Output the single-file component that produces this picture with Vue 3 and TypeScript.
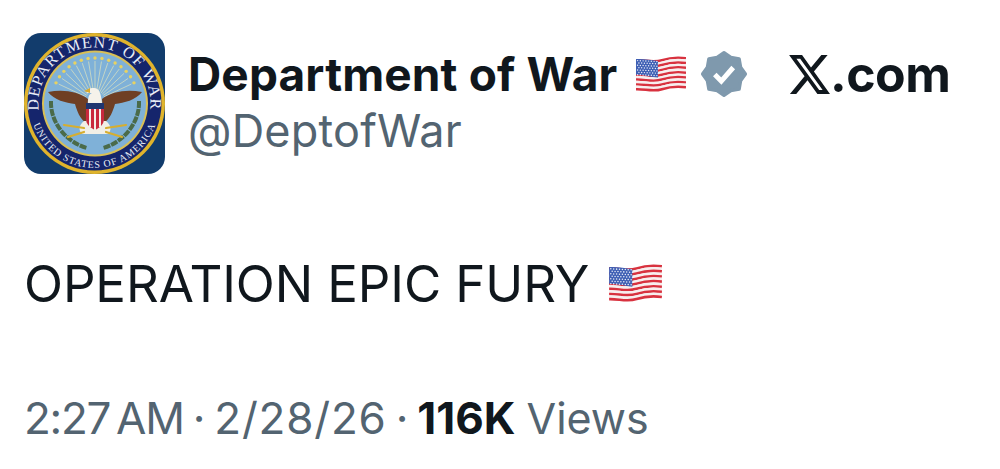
<script setup lang="ts">
const stripeColors = ['#d8323f', '#f7eeee', '#d8323f', '#f7eeee', '#d8323f', '#f7eeee', '#d8323f', '#f7eeee', '#d8323f', '#f7eeee', '#d8323f', '#f7eeee', '#d8323f']
const stripes = stripeColors.map((color, i) => {
  const y = 4.2 + i * 2.42
  return { color, d: `M0 ${y} C 9 ${y - 0.4} 17 ${y + 3} 26 ${y} S 42 ${y - 3} 50 ${y - 2}` }
})
const stars: { x: number; y: number }[] = []
for (let r = 0; r < 7; r++) {
  for (let c = 0; c < 8; c++) {
    stars.push({ x: 1.6 + c * 2.75 + (r % 2 ? 1.3 : 0), y: 4.6 + r * 2.35 + (c / 7) * 0.9 })
  }
}
const rays: { x1: number; y1: number; x2: number; y2: number; dx: number; dy: number }[] = []
for (let i = 0; i <= 14; i++) {
  const a = ((-155 + (i * 130) / 14) * Math.PI) / 180
  rays.push({
    x1: 71 + 10 * Math.cos(a),
    y1: 68 + 10 * Math.sin(a),
    x2: 71 + 40 * Math.cos(a),
    y2: 68 + 40 * Math.sin(a),
    dx: 71 + 43 * Math.cos(a),
    dy: 68 + 43 * Math.sin(a),
  })
}
const badgePoints = Array.from({ length: 16 }, (_, i) => {
  const a = ((i * 22.5 - 90) * Math.PI) / 180
  const r = i % 2 === 0 ? 19.8 : 16.6
  return `${(24 + r * Math.cos(a)).toFixed(2)},${(24 + r * Math.sin(a)).toFixed(2)}`
}).join(' ')
</script>

<template>
  <main class="tweet">
    <svg class="defs" width="0" height="0" aria-hidden="true">
      <symbol id="us-flag" viewBox="0 0 50 36">
        <g fill="none" stroke-width="2.5">
          <path v-for="(s, i) in stripes" :key="i" :d="s.d" :stroke="s.color" />
        </g>
        <path d="M0 3 C 8 2.6 15 4 22 5 V 21.6 C 15 21 8 18.6 0 18.8 Z" fill="#3e5fb4" />
        <g fill="#e9edf8">
          <circle v-for="(s, i) in stars" :key="i" :cx="s.x" :cy="s.y" r="0.72" />
        </g>
      </symbol>
    </svg>

    <header class="head">
      <svg class="avatar" viewBox="0 0 141 141" role="img" aria-label="Department of War seal">
        <rect width="141" height="141" rx="17" fill="#123c6c" />
        <circle cx="70.5" cy="70.5" r="70.5" fill="#e0b42c" />
        <circle cx="70.5" cy="70.5" r="67" fill="#15256c" />
        <circle cx="71" cy="70.5" r="53" fill="#d9bf55" />
        <circle cx="71" cy="70.5" r="51" fill="#7fb1d8" />
        <defs>
          <path id="seal-top" d="M 17.9 89.7 A 56 56 0 1 1 123.1 89.7" />
          <path id="seal-bottom" d="M 9.9 48.4 A 64.5 64.5 0 1 0 131.1 48.4" />
        </defs>
        <text class="seal top"><textPath href="#seal-top" startOffset="50%" text-anchor="middle">DEPARTMENT OF WAR</textPath></text>
        <text class="seal bottom"><textPath href="#seal-bottom" startOffset="50%" text-anchor="middle">UNITED STATES OF AMERICA</textPath></text>
        <circle cx="11" cy="68" r="1.2" fill="#dfe6f2" />
        <circle cx="130" cy="68" r="1.2" fill="#dfe6f2" />
        <g stroke="#c9d8c4" stroke-width="0.9">
          <line v-for="(r, i) in rays" :key="i" :x1="r.x1" :y1="r.y1" :x2="r.x2" :y2="r.y2" />
        </g>
        <g fill="#e8d261">
          <circle v-for="(r, i) in rays" :key="'d' + i" :cx="r.dx" :cy="r.dy" r="1.7" />
        </g>
        <g fill="none" stroke="#4a6b4a" stroke-width="4">
          <path d="M27 68 C 26 88 41 109 63 115" stroke-dasharray="7 1" />
          <path d="M115 68 C 116 88 101 109 79 115" stroke-dasharray="7 1" />
        </g>
        <path d="M24 59 C 38 56 54 58 64 66 L 62 90 C 56 86 53 78 51 71 C 42 70 30 67 24 59 Z" fill="#6f3f24" />
        <path d="M118 59 C 104 56 88 58 78 66 L 80 90 C 86 86 89 78 91 71 C 100 70 112 67 118 59 Z" fill="#6f3f24" />
        <path d="M60 88 C 55 92 54 97 58 101 L 84 101 C 88 97 87 92 82 88 Z" fill="#f1efe6" />
        <path d="M62 70 H 80 V 86 C 80 92 75 95 71 97 C 67 95 62 92 62 86 Z" fill="#c9293d" />
        <path d="M62 70 H 80 V 76 H 62 Z" fill="#20366f" />
        <g fill="#f4f1ea">
          <rect x="65" y="76" width="2" height="18" />
          <rect x="70" y="76" width="2" height="21" />
          <rect x="75" y="76" width="2" height="18" />
        </g>
        <path d="M64 70 C 64 64 65 61 68 60 L 63 60 C 62 57 65 55 70 55 C 75 55 77 60 78 70 Z" fill="#f5f2ea" />
        <path d="M66 55 L 60 58 L 66 60 Z" fill="#d8a92c" />
        <g stroke="#d6ae30" stroke-width="2.2" stroke-linecap="round" fill="none">
          <path d="M60 95 L 40 92" />
          <path d="M60 99 L 44 104" />
          <path d="M82 95 L 102 92" />
          <path d="M82 99 L 98 104" />
        </g>
      </svg>

      <div class="identity">
        <div class="name-row">
          <span class="name">Department of War</span>
          <svg class="flag flag-name" viewBox="0 0 50 36" aria-hidden="true"><use href="#us-flag" /></svg>
          <svg class="badge" viewBox="0 0 48 48" aria-label="Verified">
            <polygon :points="badgePoints" fill="#7f99ad" stroke="#7f99ad" stroke-width="3" stroke-linejoin="round" />
            <path d="M15.5 24.5 L 21.5 30.5 L 32.5 18" fill="none" stroke="#fff" stroke-width="4.6" />
          </svg>
        </div>
        <div class="handle">@DeptofWar</div>
      </div>

      <div class="site">
        <svg class="x" viewBox="1.2 2.25 21.6 19.5" preserveAspectRatio="none" aria-label="X">
          <path d="M18.244 2.25h3.308l-7.227 8.26 8.502 11.24H16.17l-5.214-6.817L4.99 21.75H1.68l7.73-8.835L1.254 2.25H8.08l4.713 6.231zm-1.161 17.52h1.833L7.084 4.126H5.117z" fill="#10171d" />
        </svg>
        <span>.com</span>
      </div>
    </header>

    <p class="body">
      <span>OPERATION EPIC FURY</span>
      <svg class="flag flag-body" viewBox="0 0 50 36" aria-hidden="true"><use href="#us-flag" /></svg>
    </p>

    <footer class="meta">
      <span class="time">2:27 AM</span>
      <span>·</span>
      <span class="date">2/28/26</span>
      <span>·</span>
      <strong>116K</strong>
      <span class="views">Views</span>
    </footer>
  </main>
</template>

<style>
html, body { background: #fff; }
</style>

<style scoped>
.tweet {
  width: 1000px;
  height: 469px;
  box-sizing: border-box;
  padding: 33px 24px 0;
  background: #fff;
  color: #10171d;
  font-family: Inter, "Liberation Sans", sans-serif;
  overflow: hidden;
}
.defs { display: block; height: 0; }
.head { display: flex; align-items: flex-start; }
.avatar { width: 141px; height: 141px; flex: none; }
.seal { font-family: "Liberation Serif", serif; fill: #e8edf6; }
.seal.top { font-size: 16px; letter-spacing: 1.2px; }
.seal.bottom { font-size: 10px; letter-spacing: 0.9px; }
.identity { margin-left: 23px; width: 601px; padding-top: 12px; flex: none; }
.name-row { display: flex; align-items: center; height: 58px; }
.name { font-size: 46px; font-weight: 700; letter-spacing: 0.15px; white-space: nowrap; }
.flag { flex: none; display: block; }
.flag-name { width: 50px; height: 36px; margin-left: 18px; }
.badge { width: 52px; height: 52px; margin-left: 12px; flex: none; }
.handle { font-size: 45px; color: #536471; line-height: 54px; letter-spacing: 0.2px; margin-top: 1px; white-space: nowrap; }
.site {
  display: flex;
  align-items: center;
  padding-top: 15px;
  font-size: 50px;
  font-weight: 700;
  line-height: 52px;
  letter-spacing: -0.5px;
}
.x { width: 41px; height: 39px; flex: none; }
.body {
  margin: 79px 0 0;
  display: flex;
  align-items: center;
  height: 60px;
  font-size: 51px;
  letter-spacing: -0.1px;
  white-space: nowrap;
}
.flag-body { width: 53px; height: 38px; margin-left: 20px; }
.meta {
  margin-top: 79px;
  display: flex;
  gap: 9px;
  font-size: 44px;
  line-height: 52px;
  color: #536471;
  white-space: nowrap;
}
.time { word-spacing: -5px; letter-spacing: -1.3px; }
.date { letter-spacing: 0.8px; }
.meta strong { color: #10171d; font-weight: 700; }
.views { margin-left: 2px; font-size: 43px; }
</style>
